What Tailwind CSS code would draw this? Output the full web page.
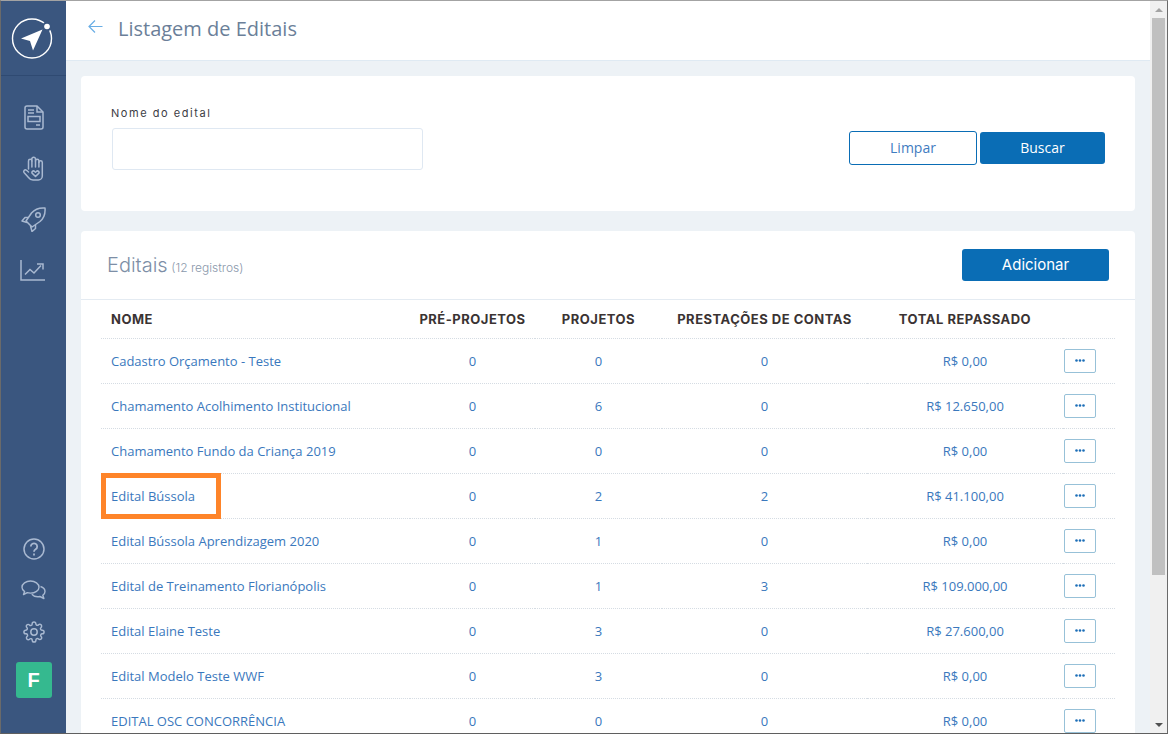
<!DOCTYPE html>
<html lang="pt-BR">
<head>
  <meta charset="UTF-8">
  <title>Listagem de Editais</title>
  <script src="https://cdn.jsdelivr.net/npm/@tailwindcss/browser@4"></script>
</head>
<body class="font-['Open_Sans',sans-serif]">
  <div class="h-[734px] w-[1168px] flex overflow-hidden border-t border-t-[#a3a3a3] border-l border-l-[#6a6a6a] border-r border-r-[#6a6a6a] border-b border-b-[#5f5f5f]">

    <!-- Sidebar -->
    <aside class="w-[65px] shrink-0 bg-[#3a567f] flex flex-col">
      <div class="h-[75px] shrink-0 border-b border-[#2f4a72] flex items-center justify-center">
        <svg width="44" height="44" viewBox="0 0 44 44" fill="none" class="mt-[1px] mr-[1px]">
          <circle cx="21" cy="21.500" r="19.500" stroke="#fff" stroke-width="1.400"/>
          <circle cx="36" cy="9.500" r="4.800" fill="#3a567f"/>
          <circle cx="36" cy="9.500" r="2.800" fill="#fff"/>
          <path d="M31.500 12.500 10 21.500 19 24 22 33.500Z" fill="#fff"/>
        </svg>
      </div>
      <nav class="mt-[16px] flex flex-col text-[#a9b9d1]">
        <div class="h-[51px] flex items-center justify-center">
          <svg width="20" height="25" viewBox="0 0 20 25" fill="none" stroke="currentColor" stroke-width="1.500">
            <path d="M1 3a2 2 0 0 1 2-2h10l6 6v15a2 2 0 0 1-2 2H3a2 2 0 0 1-2-2Z"/>
            <path d="M13 1v6h6M4 5h6M4 8h6M12 20h4"/>
            <rect x="4" y="11.500" width="12" height="5"/>
          </svg>
        </div>
        <div class="h-[51px] flex items-center justify-center">
          <svg width="24" height="25" viewBox="0 0 24 25" fill="none" stroke="currentColor" stroke-width="1.500" stroke-linejoin="round" stroke-linecap="round">
            <path d="M6.500 13V5a1.700 1.700 0 0 1 3.400 0V3a1.800 1.800 0 0 1 3.600 0v2a1.700 1.700 0 0 1 3.400 0v1.500a1.700 1.700 0 0 1 3.400 0V20a4 4 0 0 1-4 4H11c-2 0-3.400-1-4.500-2.500L2 16.500c-1-1.500.8-3.500 2.500-2.200L6.500 16"/>
            <path d="M9.900 5v6M13.500 5v6M16.900 6v5"/>
            <path d="M13.500 20.500l-3.200-3.100c-1.400-1.500.9-3.400 2.300-1.900l.9.800.9-.8c1.400-1.500 3.700.4 2.300 1.900Z"/>
          </svg>
        </div>
        <div class="h-[51px] flex items-center justify-center">
          <svg width="25" height="25" viewBox="0 0 25 25" fill="none" stroke="currentColor" stroke-width="1.500" stroke-linejoin="round">
            <path d="M24 1c.5 5.500-1 10-5 13.500L11 20l-6-6 5.500-8C14 2 18.500.5 24 1Z"/>
            <circle cx="17" cy="8" r="2.300"/>
            <path d="M7 10.500H4L1 14l5 1.500M14.500 18v3.500L11 24.500 9.500 19"/>
          </svg>
        </div>
        <div class="h-[51px] flex items-center justify-center">
          <svg width="25" height="21" viewBox="0 0 25 21" fill="none" stroke="currentColor" stroke-width="1.500" class="mr-[2px]">
            <path d="M1 0v20h24"/>
            <path d="M5 14.500l5-5 4 3.500 7-7.500"/>
            <path d="M17 4h6v5.500"/>
          </svg>
        </div>
      </nav>
      <div class="mt-auto flex flex-col items-center text-[#a9b9d1]">
        <div class="h-[41px] flex items-center justify-center">
          <svg width="22" height="22" viewBox="0 0 22 22" fill="none" stroke="currentColor" stroke-width="1.500">
            <circle cx="11" cy="11" r="10"/>
            <path d="M7.800 8.500a3.200 3.200 0 1 1 4.800 2.800c-1 .6-1.600 1.200-1.600 2.400" stroke-width="1.800"/>
            <path d="M11 15.500v2" stroke-width="1.800"/>
          </svg>
        </div>
        <div class="h-[42px] flex items-center justify-center">
          <svg width="25" height="20" viewBox="0 0 25 20" fill="none" stroke="currentColor" stroke-width="1.400" stroke-linejoin="round">
            <path d="M9.500 1C4.800 1 1 3.800 1 7.200c0 1.800 1 3.300 2.600 4.400L2.500 14.500l3.800-1.800c1 .3 2.100.4 3.200.4 4.700 0 8.500-2.600 8.500-5.900S14.200 1 9.500 1Z"/>
            <path d="M19.500 6.500c2.700.8 4.500 2.700 4.500 4.900 0 1.500-.8 2.800-2.200 3.800l1.100 3.300-4-2c-3 .6-6.400-.3-8.100-2.300"/>
          </svg>
        </div>
        <div class="h-[41px] flex items-center justify-center">
          <svg width="22" height="22" viewBox="0 0 24 24" fill="none" stroke="currentColor" stroke-width="1.600" stroke-linejoin="round">
            <circle cx="12" cy="12" r="3.500"/>
            <path d="M19.400 15a1.650 1.650 0 0 0 .33 1.820l.06.06a2 2 0 1 1-2.830 2.830l-.06-.06a1.650 1.650 0 0 0-2.820 1.170V21a2 2 0 1 1-4 0v-.09a1.650 1.650 0 0 0-2.830-1.160l-.06.06a2 2 0 1 1-2.830-2.830l.06-.06A1.650 1.650 0 0 0 3.090 14H3a2 2 0 1 1 0-4h.09a1.650 1.650 0 0 0 1.160-2.830l-.06-.06a2 2 0 1 1 2.830-2.830l.06.06A1.650 1.650 0 0 0 10 3.090V3a2 2 0 1 1 4 0v.09a1.650 1.650 0 0 0 2.820 1.160l.06-.06a2 2 0 1 1 2.830 2.830l-.06.06A1.650 1.650 0 0 0 20.910 10H21a2 2 0 1 1 0 4h-.09a1.650 1.650 0 0 0-1.510 1Z"/>
          </svg>
        </div>
        <div class="mt-[10px] mb-[35px] w-[36px] h-[36px] rounded-[3px] bg-[#35b98f] flex items-center justify-center text-white text-[20px] font-bold font-['Liberation_Sans',sans-serif]">F</div>
      </div>
    </aside>

    <!-- Main -->
    <main class="flex-1 min-w-0 flex flex-col bg-[#edf2f6]">
      <header class="h-[60px] shrink-0 bg-white border-b border-[#dfeaf3] flex items-center pl-[22px] pb-[3px]">
        <svg width="15" height="15" viewBox="0 0 15 15" fill="none" stroke="#6aaee5" stroke-width="1.200" class="mb-[5px]">
          <path d="M14.500 7.500H1M7 1.500l-6 6 6 6"/>
        </svg>
        <h1 class="ml-[15px] text-[20px] text-[#6b7f99]">Listagem de Editais</h1>
      </header>

      <div class="flex-1 min-h-0 px-[15px] pt-[15px]">
        <!-- Filtro -->
        <section class="h-[135px] bg-white rounded-[4px] flex items-start pl-[30px] pr-[30px]">
          <div class="pt-[30px]">
            <label class="block text-[11px] leading-[14px] tracking-[1.550px] text-[#3c3c44] font-['Inter',sans-serif]">Nome do edital</label>
            <input class="mt-[8px] ml-px block w-[311px] h-[42px] border border-[#dfe8f2] rounded-[3px] bg-white">
          </div>
          <div class="ml-auto mt-[55px] flex items-center">
            <button class="w-[128px] h-[34px] pb-[2px] border border-[#0a6db5] rounded-[3px] text-[14px] text-[#3f7cbf]">Limpar</button>
            <button class="ml-[3px] w-[125px] h-[32px] pb-[2px] bg-[#0a6db5] rounded-[3px] text-[14px] text-white">Buscar</button>
          </div>
        </section>

        <!-- Lista -->
        <section class="mt-[20px] bg-white rounded-t-[4px]">
          <div class="h-[69px] border-b border-[#e4ebf2] flex items-center pl-[26px] pr-[26px]">
            <h2 class="text-[20px] font-light text-[#7d8ea6] font-['Inter',sans-serif]">Editais <span class="-ml-[2px] text-[12px] text-[#8a98ab]">(12 registros)</span></h2>
            <button class="ml-auto w-[147px] h-[32px] bg-[#0a6db5] rounded-[3px] text-[15px] text-white font-['Inter',sans-serif]">Adicionar</button>
          </div>
          <div class="px-[20px]">
            <table class="w-[1014px] table-fixed border-collapse text-[13px] text-[#3a78bd]">
              <colgroup>
                <col class="w-[309px]"><col class="w-[125px]"><col class="w-[127px]"><col class="w-[205px]"><col class="w-[196px]"><col>
              </colgroup>
              <thead class="text-[13px] font-bold tracking-[0.500px] text-[#3a3333] font-['Inter',sans-serif]">
                <tr class="h-[38px] border-b border-dotted border-[#d5dce3] [&>th]:pt-[2px]">
                  <th class="pl-[10px] text-left">NOME</th>
                  <th>PRÉ-PROJETOS</th>
                  <th>PROJETOS</th>
                  <th>PRESTAÇÕES DE CONTAS</th>
                  <th>TOTAL REPASSADO</th>
                  <th></th>
                </tr>
              </thead>
              <tbody class="text-center [&>tr>td:not(:last-child)]:pt-[2px]">
                <tr class="h-[45px] border-b border-dotted border-[#d5dce3]">
                  <td class="pl-[10px] text-left">Cadastro Orçamento - Teste</td><td>0</td><td>0</td><td>0</td><td>R$ 0,00</td>
                  <td><button class="ml-px w-[32px] h-[24px] flex items-center justify-center border border-[#97c1d8] rounded-[2px]"><svg width="10" height="3" fill="#1d6fb8"><circle cx="1.500" cy="1.500" r="1.300"/><circle cx="5" cy="1.500" r="1.300"/><circle cx="8.500" cy="1.500" r="1.300"/></svg></button></td>
                </tr>
                <tr class="h-[45px] border-b border-dotted border-[#d5dce3]">
                  <td class="pl-[10px] text-left">Chamamento Acolhimento Institucional</td><td>0</td><td>6</td><td>0</td><td>R$ 12.650,00</td>
                  <td><button class="ml-px w-[32px] h-[24px] flex items-center justify-center border border-[#97c1d8] rounded-[2px]"><svg width="10" height="3" fill="#1d6fb8"><circle cx="1.500" cy="1.500" r="1.300"/><circle cx="5" cy="1.500" r="1.300"/><circle cx="8.500" cy="1.500" r="1.300"/></svg></button></td>
                </tr>
                <tr class="h-[45px] border-b border-dotted border-[#d5dce3]">
                  <td class="pl-[10px] text-left">Chamamento Fundo da Criança 2019</td><td>0</td><td>0</td><td>0</td><td>R$ 0,00</td>
                  <td><button class="ml-px w-[32px] h-[24px] flex items-center justify-center border border-[#97c1d8] rounded-[2px]"><svg width="10" height="3" fill="#1d6fb8"><circle cx="1.500" cy="1.500" r="1.300"/><circle cx="5" cy="1.500" r="1.300"/><circle cx="8.500" cy="1.500" r="1.300"/></svg></button></td>
                </tr>
                <tr class="h-[45px] border-b border-dotted border-[#d5dce3]">
                  <td class="relative pl-[10px] text-left">Edital Bússola
                    <!-- destaque laranja sobre a linha -->
                    <div class="absolute left-0 -top-px w-[120px] h-[46px] border-[5px] border-[#fe8429]"></div>
                  </td><td>0</td><td>2</td><td>2</td><td>R$ 41.100,00</td>
                  <td><button class="ml-px w-[32px] h-[24px] flex items-center justify-center border border-[#97c1d8] rounded-[2px]"><svg width="10" height="3" fill="#1d6fb8"><circle cx="1.500" cy="1.500" r="1.300"/><circle cx="5" cy="1.500" r="1.300"/><circle cx="8.500" cy="1.500" r="1.300"/></svg></button></td>
                </tr>
                <tr class="h-[45px] border-b border-dotted border-[#d5dce3]">
                  <td class="pl-[10px] text-left">Edital Bússola Aprendizagem 2020</td><td>0</td><td>1</td><td>0</td><td>R$ 0,00</td>
                  <td><button class="ml-px w-[32px] h-[24px] flex items-center justify-center border border-[#97c1d8] rounded-[2px]"><svg width="10" height="3" fill="#1d6fb8"><circle cx="1.500" cy="1.500" r="1.300"/><circle cx="5" cy="1.500" r="1.300"/><circle cx="8.500" cy="1.500" r="1.300"/></svg></button></td>
                </tr>
                <tr class="h-[45px] border-b border-dotted border-[#d5dce3]">
                  <td class="pl-[10px] text-left">Edital de Treinamento Florianópolis</td><td>0</td><td>1</td><td>3</td><td>R$ 109.000,00</td>
                  <td><button class="ml-px w-[32px] h-[24px] flex items-center justify-center border border-[#97c1d8] rounded-[2px]"><svg width="10" height="3" fill="#1d6fb8"><circle cx="1.500" cy="1.500" r="1.300"/><circle cx="5" cy="1.500" r="1.300"/><circle cx="8.500" cy="1.500" r="1.300"/></svg></button></td>
                </tr>
                <tr class="h-[45px] border-b border-dotted border-[#d5dce3]">
                  <td class="pl-[10px] text-left">Edital Elaine Teste</td><td>0</td><td>3</td><td>0</td><td>R$ 27.600,00</td>
                  <td><button class="ml-px w-[32px] h-[24px] flex items-center justify-center border border-[#97c1d8] rounded-[2px]"><svg width="10" height="3" fill="#1d6fb8"><circle cx="1.500" cy="1.500" r="1.300"/><circle cx="5" cy="1.500" r="1.300"/><circle cx="8.500" cy="1.500" r="1.300"/></svg></button></td>
                </tr>
                <tr class="h-[45px] border-b border-dotted border-[#d5dce3]">
                  <td class="pl-[10px] text-left">Edital Modelo Teste WWF</td><td>0</td><td>3</td><td>0</td><td>R$ 0,00</td>
                  <td><button class="ml-px w-[32px] h-[24px] flex items-center justify-center border border-[#97c1d8] rounded-[2px]"><svg width="10" height="3" fill="#1d6fb8"><circle cx="1.500" cy="1.500" r="1.300"/><circle cx="5" cy="1.500" r="1.300"/><circle cx="8.500" cy="1.500" r="1.300"/></svg></button></td>
                </tr>
                <tr class="h-[45px] border-b border-dotted border-[#d5dce3]">
                  <td class="pl-[10px] text-left">EDITAL OSC CONCORRÊNCIA</td><td>0</td><td>0</td><td>0</td><td>R$ 0,00</td>
                  <td><button class="ml-px w-[32px] h-[24px] flex items-center justify-center border border-[#97c1d8] rounded-[2px]"><svg width="10" height="3" fill="#1d6fb8"><circle cx="1.500" cy="1.500" r="1.300"/><circle cx="5" cy="1.500" r="1.300"/><circle cx="8.500" cy="1.500" r="1.300"/></svg></button></td>
                </tr>
              </tbody>
            </table>
          </div>
        </section>
      </div>
    </main>

    <!-- Scrollbar do navegador -->
    <div class="w-[17px] shrink-0 bg-[#f0f0f0] flex flex-col items-center">
      <div class="h-[17px] flex items-center justify-center">
        <div class="w-0 h-0 border-x-[4px] border-x-transparent border-b-[4px] border-b-[#a3a3a3]"></div>
      </div>
      <div class="w-[13px] h-[557px] bg-[#c0c0c0]"></div>
      <div class="mt-auto h-[17px] flex items-center justify-center">
        <div class="w-0 h-0 border-x-[4px] border-x-transparent border-t-[4px] border-t-[#505050]"></div>
      </div>
    </div>
  </div>
</body>
</html>
